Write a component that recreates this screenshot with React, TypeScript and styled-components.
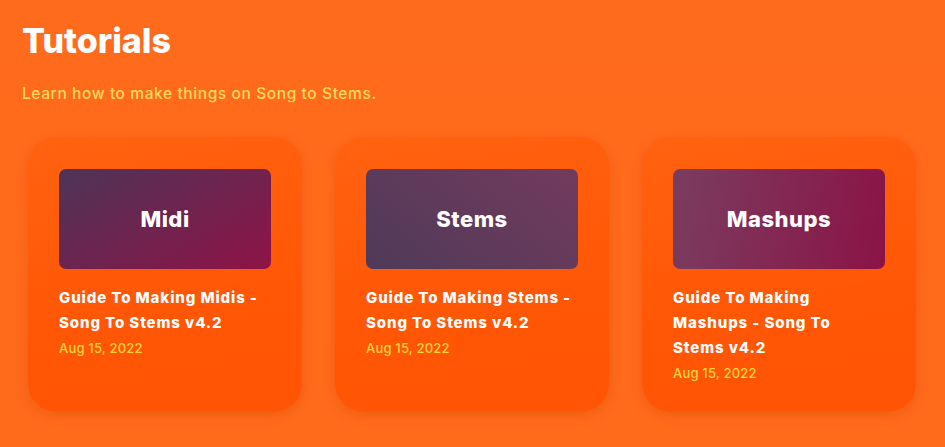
import React from 'react';
import styled, { createGlobalStyle } from 'styled-components';

const GlobalStyle = createGlobalStyle`
  html, body {
    margin: 0;
    padding: 0;
    background: #ff6a1b;
    font-family: Inter, "Noto Sans", sans-serif;
    overflow: hidden;
  }
`;

const Page = styled.div`
  padding: 23px 30px 0 22px;
  min-height: 447px;
  box-sizing: border-box;
  background: linear-gradient(180deg, #ff6b1c 0%, #ff6a1b 100%);
`;

const Title = styled.h1`
  margin: 0;
  font-size: 34px;
  line-height: 36px;
  font-weight: 800;
  color: #ffffff;
  letter-spacing: 0;
`;

const Subtitle = styled.p`
  margin: 25px 0 0;
  font-size: 15.5px;
  line-height: 20px;
  font-weight: 500;
  color: #ffd95e;
  letter-spacing: 0.6px;
`;

const Grid = styled.div`
  display: grid;
  grid-template-columns: repeat(3, 274px);
  column-gap: 33px;
  margin: 33px 0 0 6px;
`;

const Card = styled.div`
  height: 275px;
  box-sizing: border-box;
  padding: 32px 31px;
  border-radius: 28px;
  background: linear-gradient(170deg, #ff6210 0%, #ff5706 60%, #ff5505 100%);
  box-shadow: 0 3px 12px rgba(200, 70, 0, 0.3);
`;

const Thumb = styled.div<{ $from: string; $to: string; $angle: number }>`
  height: 100px;
  border-radius: 7px;
  display: flex;
  align-items: center;
  justify-content: center;
  background: linear-gradient(${p => p.$angle}deg, ${p => p.$from} 0%, ${p => p.$to} 100%);
  color: #fff;
  font-size: 22px;
  font-weight: 800;
  letter-spacing: 0.5px;
`;

const CardTitle = styled.div`
  margin-top: 16px;
  font-size: 15px;
  line-height: 25px;
  font-weight: 800;
  color: #fff;
  letter-spacing: 0.9px;
`;

const CardDate = styled.div`
  margin-top: 3px;
  font-size: 13px;
  line-height: 20px;
  font-weight: 500;
  color: #ffd23f;
  letter-spacing: 0.2px;
`;

const tutorials = [
  {
    tag: 'Midi',
    title: 'Guide To Making Midis - Song To Stems v4.2',
    date: 'Aug 15, 2022',
    from: '#4d3457',
    to: '#8f1347',
    angle: 150,
  },
  {
    tag: 'Stems',
    title: 'Guide To Making Stems - Song To Stems v4.2',
    date: 'Aug 15, 2022',
    from: '#4f3a58',
    to: '#733a5e',
    angle: 40,
  },
  {
    tag: 'Mashups',
    title: 'Guide To Making Mashups - Song To Stems v4.2',
    date: 'Aug 15, 2022',
    from: '#7a3d60',
    to: '#8b1346',
    angle: 100,
  },
];

const App: React.FC = () => (
  <>
    <GlobalStyle />
    <Page>
      <Title>Tutorials</Title>
      <Subtitle>Learn how to make things on Song to Stems.</Subtitle>
      <Grid>
        {tutorials.map(t => (
          <Card key={t.tag}>
            <Thumb $from={t.from} $to={t.to} $angle={t.angle}>{t.tag}</Thumb>
            <CardTitle>{t.title}</CardTitle>
            <CardDate>{t.date}</CardDate>
          </Card>
        ))}
      </Grid>
    </Page>
  </>
);

export default App;
